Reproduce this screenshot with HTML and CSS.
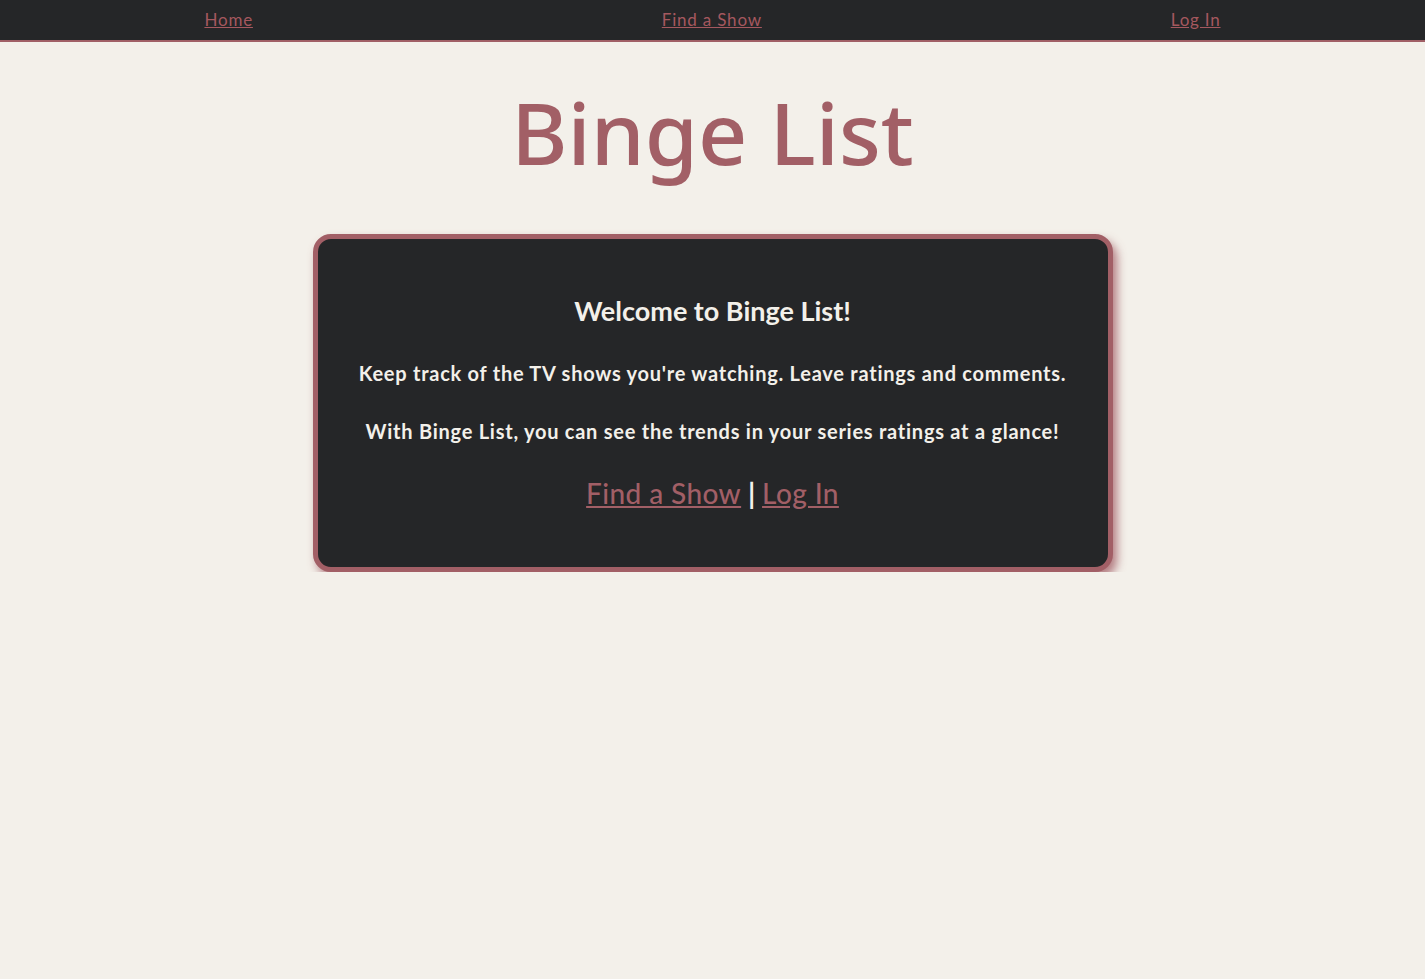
FILE: index.html
```html
<!DOCTYPE html>
<html lang="en">
<head>
<meta charset="utf-8">
<title>Binge List</title>
<link rel="stylesheet" href="styles.css">
</head>
<body>
<nav class="nav">
  <a class="nav-link" href="#">Home</a>
  <a class="nav-link" href="#">Find a Show</a>
  <a class="nav-link" href="#">Log In</a>
</nav>
<main class="main">
  <h1 class="title">Binge List</h1>
  <section class="card">
    <h2 class="card-heading">Welcome to Binge List!</h2>
    <p class="card-text">Keep track of the TV shows you're watching. Leave ratings and comments.</p>
    <p class="card-text">With Binge List, you can see the trends in your series ratings at a glance!</p>
    <p class="card-links"><a class="card-link" href="#">Find a Show</a> | <a class="card-link" href="#">Log In</a></p>
  </section>
</main>
</body>
</html>
```

FILE: styles.css
```css
html, body {
  margin: 0;
  padding: 0;
}
body {
  background: #f3f0ea;
  font-family: "Lato", "Noto Sans", sans-serif;
  color: #f3f0ea;
}
.nav {
  display: flex;
  justify-content: space-around;
  align-items: flex-start;
  height: 40px;
  background: #252628;
  border-bottom: 2px solid #a05f66;
}
.nav-link {
  color: #a5585f;
  font-size: 17px;
  line-height: 1;
  letter-spacing: 0.8px;
  margin-top: 11px;
}
.main {
  display: flex;
  flex-direction: column;
  align-items: center;
}
.title {
  margin: 40px 0 0;
  font-family: "Noto Sans", "Lato", sans-serif;
  font-weight: 500;
  font-size: 86px;
  line-height: 100px;
  color: #a25f66;
}
.card {
  box-sizing: border-box;
  width: 800px;
  margin-top: 52px;
  padding: 54px 40px 56px;
  background: #252628;
  border: 5px solid #a25f66;
  border-radius: 18px;
  box-shadow: 4px 6px 10px rgba(162, 95, 102, 0.8);
  text-align: center;
}
.card-heading {
  margin: 0 0 30px;
  font-size: 27px;
  line-height: 36px;
  font-weight: 700;
}
.card-text {
  margin: 0 0 30px;
  font-size: 20px;
  line-height: 28px;
  font-weight: 700;
  letter-spacing: 0.75px;
}
.card-links {
  margin: 0;
  font-size: 28px;
  line-height: 36px;
  font-weight: 700;
}
.card-link {
  color: #a25f66;
  font-weight: 500;
  letter-spacing: 0.4px;
}
```
